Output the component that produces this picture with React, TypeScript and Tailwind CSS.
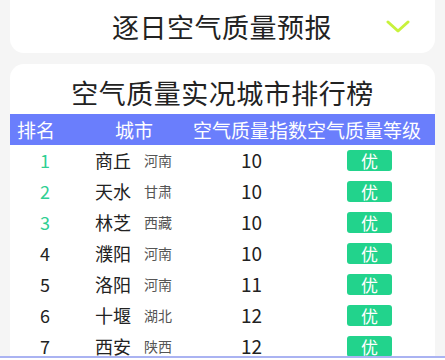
type Row = { rank: number; city: string; province: string; aqi: number; level: string };

const rows: Row[] = [
    { rank: 1, city: '商丘', province: '河南', aqi: 10, level: '优' },
    { rank: 2, city: '天水', province: '甘肃', aqi: 10, level: '优' },
    { rank: 3, city: '林芝', province: '西藏', aqi: 10, level: '优' },
    { rank: 4, city: '濮阳', province: '河南', aqi: 10, level: '优' },
    { rank: 5, city: '洛阳', province: '河南', aqi: 11, level: '优' },
    { rank: 6, city: '十堰', province: '湖北', aqi: 12, level: '优' },
    { rank: 7, city: '西安', province: '陕西', aqi: 12, level: '优' },
];

const font = { fontFamily: '"Noto Sans CJK SC", "Noto Sans", sans-serif' };

const App = () => {
    return (
        <div className="h-[360px] overflow-hidden bg-[#f5f5f5] px-[10px] text-[#222]" style={font}>
            {/* forecast selector */}
            <div className="flex h-[53px] items-center rounded-b-[14px] bg-white">
                <div className="flex-1 pl-[102px] text-[27px] leading-none tracking-[0.5px]">逐日空气质量预报</div>
                <svg className="mr-[25px]" width="24" height="14" viewBox="0 0 24 14" fill="none">
                    <polyline points="2,2 12,11 22,2" stroke="#c8f23c" strokeWidth="3" strokeLinecap="round" strokeLinejoin="round" />
                </svg>
            </div>

            {/* ranking card */}
            <div className="mt-[11px] rounded-t-[14px] bg-white">
                <div className="flex h-[50px] items-end justify-center pb-[8px] text-[27px] leading-none tracking-[0.5px]">
                    空气质量实况城市排行榜
                </div>

                <div className="flex h-[31px] items-center whitespace-nowrap bg-[#6a7efc] text-[19px] leading-none text-white">
                    <span className="w-[105px] pl-[7px]">排名</span>
                    <span className="w-[78px]">城市</span>
                    <span>空气质量指数空气质量等级</span>
                </div>

                {rows.map(r => (
                    <div key={r.rank} className="flex h-[31px] items-center">
                        <span
                            className={`w-[70px] text-center text-[18px] ${r.rank <= 3 ? 'text-[#2fcf93]' : 'text-[#222]'}`}
                        >
                            {r.rank}
                        </span>
                        <span className="ml-[15px] w-[146px] flex items-center">
                            <span className="text-[18px]">{r.city}</span>
                            <span className="ml-[13px] text-[14px] text-[#555]">{r.province}</span>
                        </span>
                        <span className="w-[106px] text-[19px]">{r.aqi}</span>
                        <span className="flex h-[21px] w-[45px] items-center justify-center rounded-[3px] bg-[#22d38c] text-[17px] text-white">
                            {r.level}
                        </span>
                    </div>
                ))}
            </div>

            <div className="fixed bottom-0 left-0 h-[4px] w-full border-t-2 border-[#aab3f2] bg-white" />
        </div>
    );
};

export default App;
